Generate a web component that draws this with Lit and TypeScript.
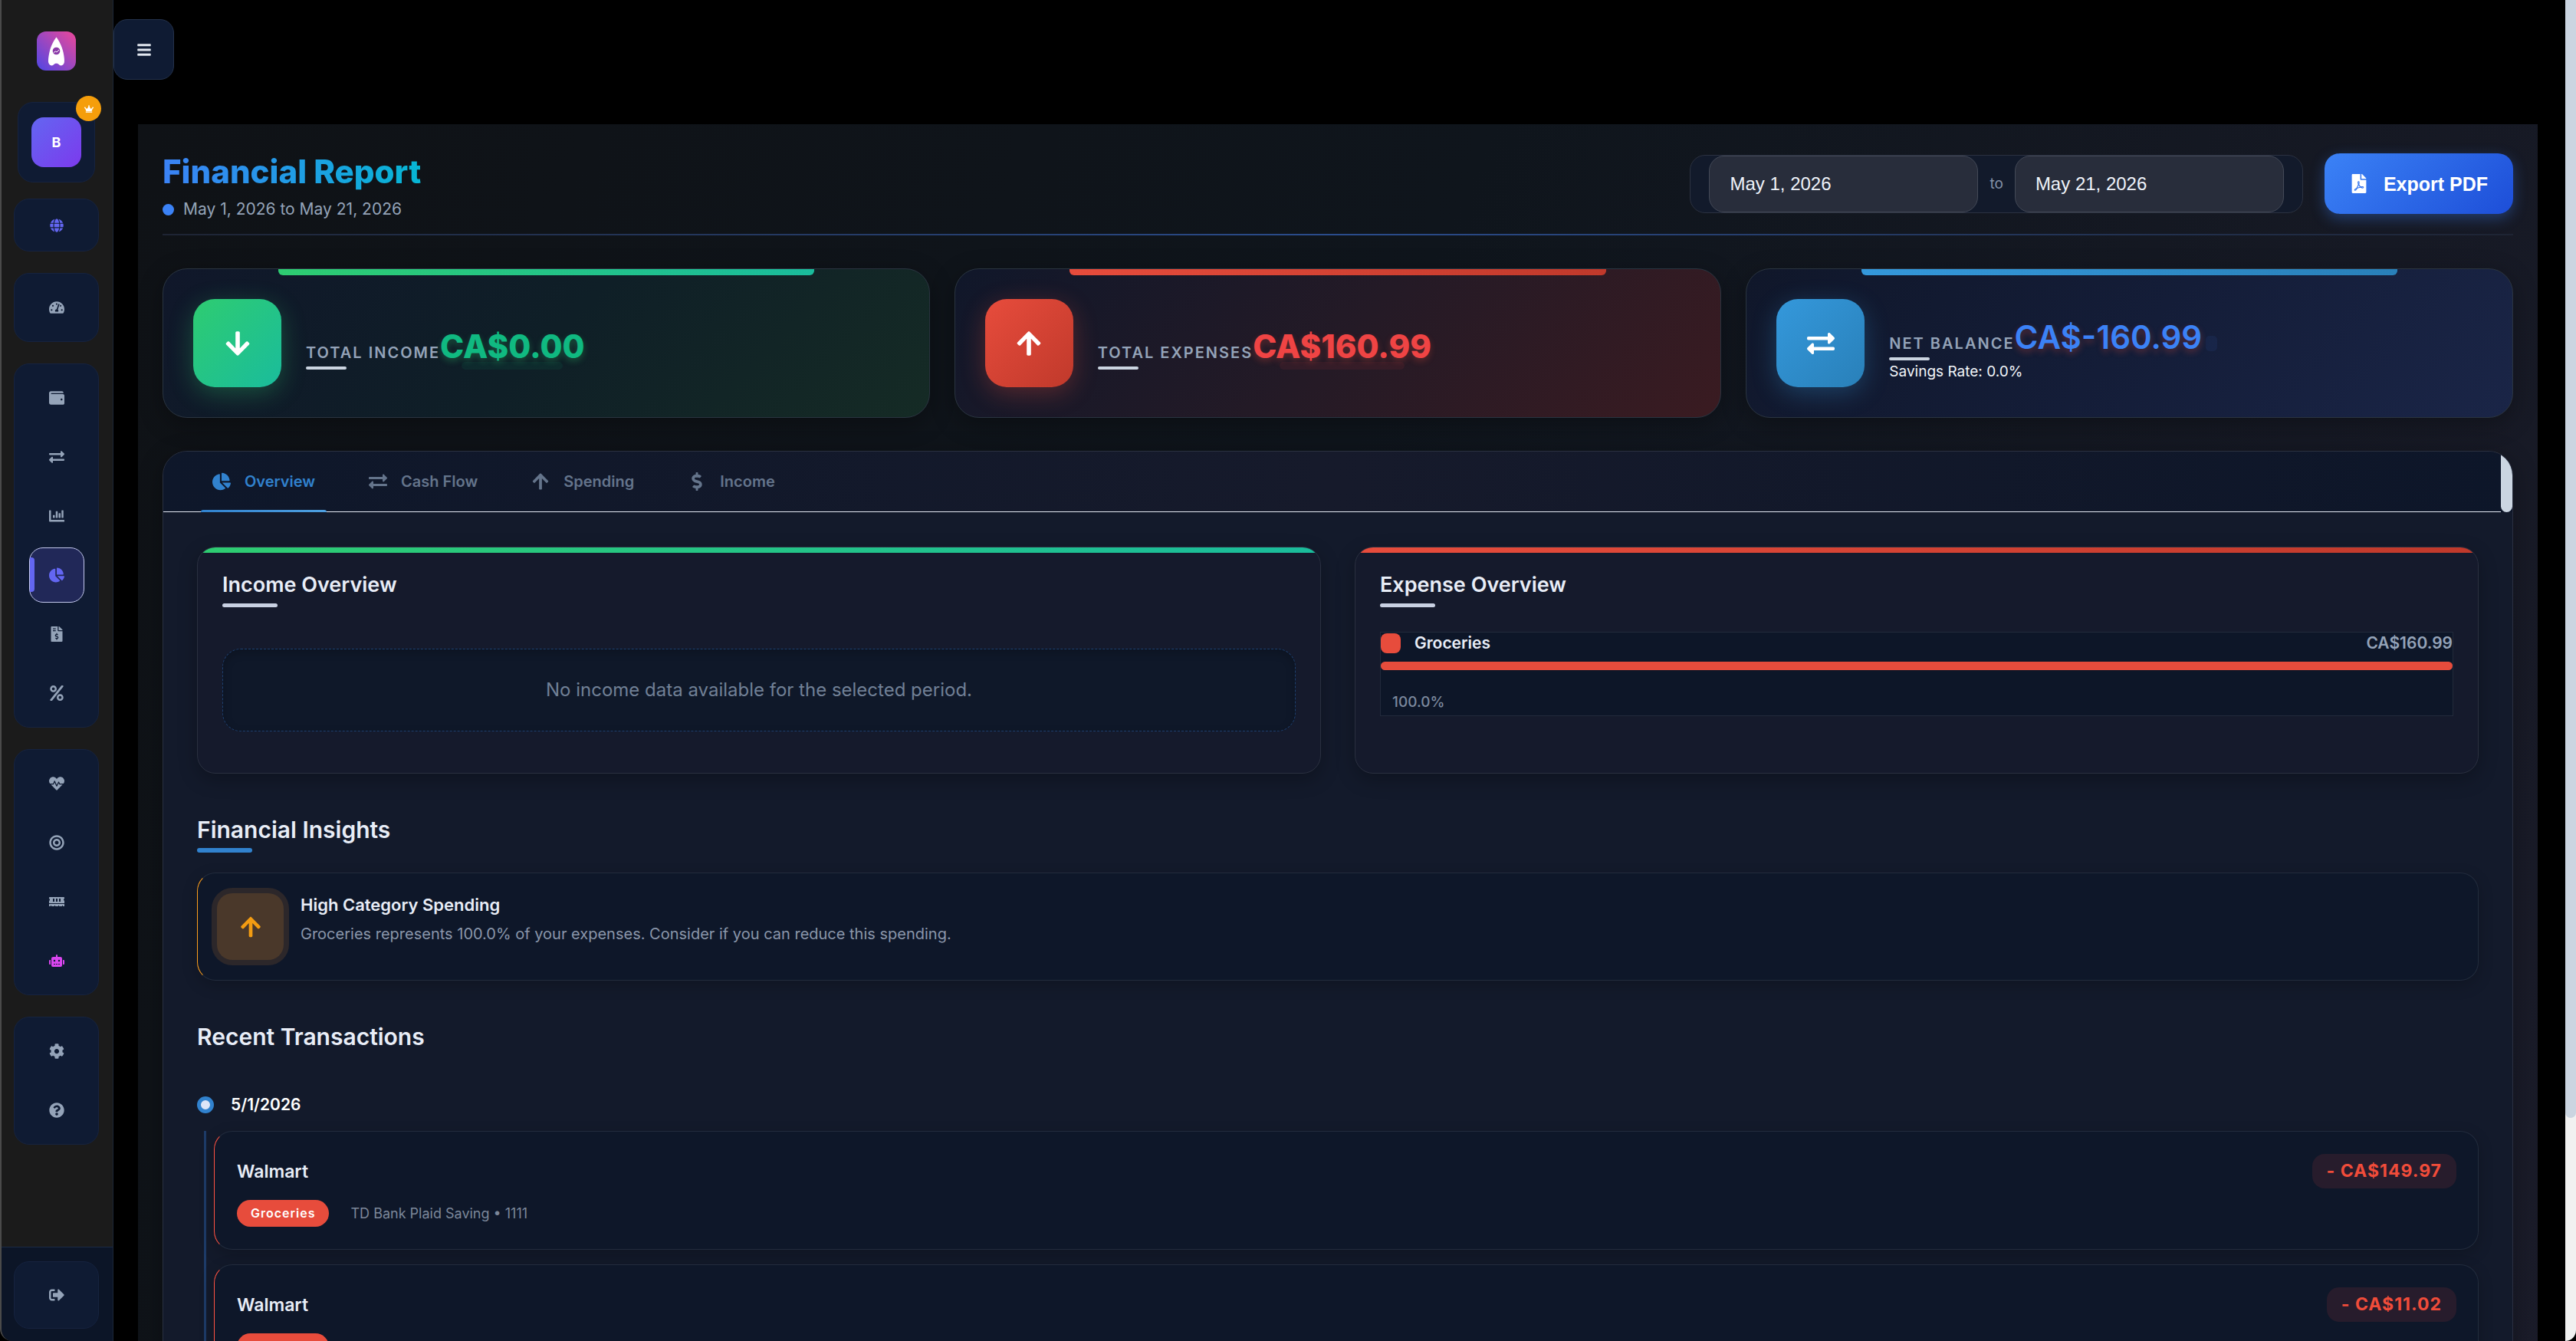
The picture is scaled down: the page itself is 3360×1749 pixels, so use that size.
import { LitElement, html, css, svg } from "lit";
import { customElement, property, state } from "lit/decorators.js";
import { classMap } from "lit/directives/class-map.js";
import { styleMap } from "lit/directives/style-map.js";

/* Icon outlines: [view box width, path]; every view box is 512 high. */
const ICONS: Record<string, [number, string]> = {
  bars: [448, "M16 132h416c8.837 0 16-7.163 16-16V76c0-8.837-7.163-16-16-16H16C7.163 60 0 67.163 0 76v40c0 8.837 7.163 16 16 16zm0 160h416c8.837 0 16-7.163 16-16v-40c0-8.837-7.163-16-16-16H16c-8.837 0-16 7.163-16 16v40c0 8.837 7.163 16 16 16zm0 160h416c8.837 0 16-7.163 16-16v-40c0-8.837-7.163-16-16-16H16c-8.837 0-16 7.163-16 16v40c0 8.837 7.163 16 16 16z"],
  arrowDown: [448, "M413.1 222.5l22.2 22.2c9.4 9.4 9.4 24.6 0 33.9L241 473c-9.4 9.4-24.6 9.4-33.9 0L12.7 278.6c-9.4-9.4-9.4-24.6 0-33.9l22.2-22.2c9.5-9.5 25-9.3 34.3.4L184 343.4V56c0-13.3 10.7-24 24-24h32c13.3 0 24 10.7 24 24v287.4l114.8-120.5c9.3-9.8 24.8-10 34.3-.4z"],
  arrowUp: [448, "M34.9 289.5l-22.2-22.2c-9.4-9.4-9.4-24.6 0-33.9L207 39c9.4-9.4 24.6-9.4 33.9 0l194.3 194.3c9.4 9.4 9.4 24.6 0 33.9L413 289.4c-9.5 9.5-25 9.3-34.3-.4L264 168.6V456c0 13.3-10.7 24-24 24h-32c-13.3 0-24-10.7-24-24V168.6L69.2 289.1c-9.3 9.8-24.8 10-34.3.4z"],
  exchange: [512, "M0 168v-16c0-13.255 10.745-24 24-24h360V80c0-21.367 25.899-32.042 40.971-16.971l80 80c9.372 9.373 9.372 24.569 0 33.941l-80 80C409.956 271.982 384 261.456 384 240v-48H24c-13.255 0-24-10.745-24-24zm488 152H128v-48c0-21.314-25.862-32.08-40.971-16.971l-80 80c-9.372 9.373-9.372 24.569 0 33.941l80 80C102.057 463.997 128 453.437 128 432v-48h360c13.255 0 24-10.745 24-24v-16c0-13.255-10.745-24-24-24z"],
  chartPie: [544, "M527.79 288H290.5l158.03 158.03c6.04 6.04 15.98 6.53 22.19.68 38.7-36.46 65.32-85.61 73.13-140.86 1.34-9.46-6.51-17.85-16.06-17.85zm-15.83-64.8C503.72 103.74 408.26 8.28 288.8.04 279.68-.59 272 7.1 272 16.24V240h223.77c9.14 0 16.82-7.68 16.19-16.8zM224 288V50.71c0-9.55-8.39-17.4-17.84-16.06C86.99 51.49-4.1 155.6.14 280.37 4.5 408.51 114.83 513.59 243.03 511.98c50.4-.63 96.97-16.87 135.26-44.03 7.9-5.6 8.42-17.23 1.57-24.08L224 288z"],
  wallet: [512, "M461.2 128H80c-8.84 0-16-7.16-16-16s7.16-16 16-16h384c8.84 0 16-7.16 16-16 0-26.51-21.49-48-48-48H64C28.65 32 0 60.65 0 96v320c0 35.35 28.65 64 64 64h397.2c28.02 0 50.8-21.53 50.8-48V176c0-26.47-22.78-48-50.8-48zM416 336c-17.67 0-32-14.33-32-32s14.33-32 32-32 32 14.33 32 32-14.33 32-32 32z"],
  chartBar: [512, "M332.8 320h38.4c6.4 0 12.8-6.4 12.8-12.8V172.8c0-6.4-6.4-12.8-12.8-12.8h-38.4c-6.4 0-12.8 6.4-12.8 12.8v134.4c0 6.4 6.4 12.8 12.8 12.8zm96 0h38.4c6.4 0 12.8-6.4 12.8-12.8V76.8c0-6.4-6.4-12.8-12.8-12.8h-38.4c-6.4 0-12.8 6.4-12.8 12.8v230.4c0 6.4 6.4 12.8 12.8 12.8zm-288 0h38.4c6.4 0 12.8-6.4 12.8-12.8v-70.4c0-6.4-6.4-12.8-12.8-12.8h-38.4c-6.4 0-12.8 6.4-12.8 12.8v70.4c0 6.4 6.4 12.8 12.8 12.8zm96 0h38.4c6.4 0 12.8-6.4 12.8-12.8V108.8c0-6.4-6.4-12.8-12.8-12.8h-38.4c-6.4 0-12.8 6.4-12.8 12.8v198.4c0 6.4 6.4 12.8 12.8 12.8zM496 384H64V80c0-8.84-7.16-16-16-16H16C7.16 64 0 71.16 0 80v336c0 17.67 14.33 32 32 32h464c8.84 0 16-7.16 16-16v-32c0-8.84-7.16-16-16-16z"],
  invoice: [384, "M377 105L279.1 7c-4.5-4.5-10.6-7-17-7H256v128h128v-6.1c0-6.3-2.5-12.4-7-16.9zm-153 31V0H24C10.7 0 0 10.7 0 24v464c0 13.3 10.7 24 24 24h336c13.3 0 24-10.7 24-24V160H248c-13.2 0-24-10.8-24-24zM64 72c0-4.42 3.58-8 8-8h80c4.42 0 8 3.58 8 8v16c0 4.42-3.58 8-8 8H72c-4.42 0-8-3.58-8-8V72zm0 80v-16c0-4.42 3.58-8 8-8h80c4.42 0 8 3.58 8 8v16c0 4.42-3.58 8-8 8H72c-4.42 0-8-3.58-8-8zm144 263.88V440c0 4.42-3.58 8-8 8h-16c-4.42 0-8-3.58-8-8v-24.29c-11.29-.58-22.27-4.52-31.37-11.35-3.9-2.93-4.1-8.77-.57-12.14l11.75-11.21c2.77-2.64 6.89-2.76 10.13-.73 3.87 2.42 8.26 3.72 12.82 3.72h28.11c6.5 0 11.8-5.92 11.8-13.19 0-5.95-3.61-11.19-8.77-12.73l-45-13.5c-18.59-5.58-31.58-23.42-31.58-43.39 0-24.52 19.05-44.44 42.67-45.07V232c0-4.42 3.58-8 8-8h16c4.42 0 8 3.58 8 8v24.29c11.29.58 22.27 4.51 31.37 11.35 3.9 2.93 4.1 8.77.57 12.14l-11.75 11.21c-2.77 2.64-6.89 2.76-10.13.73-3.87-2.43-8.26-3.72-12.82-3.72h-28.11c-6.5 0-11.8 5.92-11.8 13.19 0 5.95 3.61 11.19 8.77 12.73l45 13.5c18.59 5.58 31.58 23.42 31.58 43.39 0 24.53-19.05 44.44-42.67 45.07z"],
  percent: [448, "M112 224c61.9 0 112-50.1 112-112S173.9 0 112 0 0 50.1 0 112s50.1 112 112 112zm0-160c26.5 0 48 21.5 48 48s-21.5 48-48 48-48-21.5-48-48 21.5-48 48-48zm224 224c-61.9 0-112 50.1-112 112s50.1 112 112 112 112-50.1 112-112-50.1-112-112-112zm0 160c-26.5 0-48-21.5-48-48s21.5-48 48-48 48 21.5 48 48-21.5 48-48 48zM392.3.2l31.6-.1c19.4-.1 30.9 21.8 19.7 37.8L77.4 501.6a23.95 23.95 0 0 1-19.6 10.2l-33.4.1c-19.5 0-30.9-21.9-19.7-37.8l368-463.7C377.2 4 384.5.2 392.3.2z"],
  heartbeat: [512, "M320.2 243.8l-49.7 99.4c-6 12.1-23.4 11.7-28.9-.6l-56.9-126.3-30 71.7H60.6l182.5 186.5c7.1 7.3 18.6 7.3 25.7 0L451.4 288H342.3l-22.1-44.2zM473.7 73.9l-2.4-2.5c-51.5-52.6-135.8-52.6-187.4 0L256 100l-27.9-28.5c-51.5-52.7-135.9-52.7-187.4 0l-2.4 2.4C-10.4 123.7-12.5 203 31 256h102.4l35.9-86.2c5.4-12.9 23.6-13.1 29.4-.4l58.2 129.3 49-97.9c5.9-11.8 22.7-11.8 28.6 0l27.6 55.2H481c43.5-53 41.4-132.3-7.3-182.1z"],
  bullseye: [496, "M248 8C111.03 8 0 119.03 0 256s111.03 248 248 248 248-111.03 248-248S384.97 8 248 8zm0 432c-101.69 0-184-82.29-184-184 0-101.69 82.29-184 184-184 101.69 0 184 82.29 184 184 0 101.69-82.29 184-184 184zm0-312c-70.69 0-128 57.31-128 128s57.31 128 128 128 128-57.31 128-128-57.31-128-128-128zm0 192c-35.29 0-64-28.71-64-64s28.71-64 64-64 64 28.71 64 64-28.71 64-64 64z"],
  memory: [640, "M640 130.94V96c0-17.67-14.33-32-32-32H32c-17.67 0-32 14.33-32 32v34.94c18.6 6.61 32 24.19 32 45.06s-13.4 38.45-32 45.06V320h640v-98.94c-18.6-6.61-32-24.19-32-45.06s13.4-38.45 32-45.06zM224 256h-64V128h64v128zm128 0h-64V128h64v128zm128 0h-64V128h64v128zM0 448h64v-26.67c0-8.84 7.16-16 16-16s16 7.16 16 16V448h128v-26.67c0-8.84 7.16-16 16-16s16 7.16 16 16V448h128v-26.67c0-8.84 7.16-16 16-16s16 7.16 16 16V448h128v-26.67c0-8.84 7.16-16 16-16s16 7.16 16 16V448h64v-96H0v96z"],
  robot: [640, "M32 224h32v192H32a31.96 31.96 0 0 1-32-32V256a31.96 31.96 0 0 1 32-32zm512-48v272a64.06 64.06 0 0 1-64 64H160a64.06 64.06 0 0 1-64-64V176a79.97 79.97 0 0 1 80-80h112V32a32 32 0 0 1 64 0v64h112a79.97 79.97 0 0 1 80 80zm-280 80a40 40 0 1 0-40 40 40 40 0 0 0 40-40zm-8 128h-64v32h64zm96 0h-64v32h64zm104-128a40 40 0 1 0-40 40 40 40 0 0 0 40-40zm-8 128h-64v32h64zm192-128v128a31.96 31.96 0 0 1-32 32h-32V224h32a31.96 31.96 0 0 1 32 32z"],
  cog: [512, "M487.4 315.7l-42.6-24.6c4.3-23.2 4.3-47 0-70.2l42.6-24.6c4.9-2.8 7.1-8.6 5.5-14-11.1-35.6-30-67.8-54.7-94.6-3.8-4.1-10-5.1-14.8-2.3L380.8 110c-17.9-15.4-38.5-27.3-60.8-35.1V25.8c0-5.6-3.9-10.5-9.4-11.7-36.7-8.2-74.3-7.8-109.2 0-5.5 1.2-9.4 6.1-9.4 11.7V75c-22.2 7.9-42.8 19.8-60.8 35.1L88.7 85.5c-4.9-2.8-11-1.9-14.8 2.3-24.7 26.7-43.6 58.9-54.7 94.6-1.7 5.4.6 11.2 5.5 14L67.3 221c-4.3 23.2-4.3 47 0 70.2l-42.6 24.6c-4.9 2.8-7.1 8.6-5.5 14 11.1 35.6 30 67.8 54.7 94.6 3.8 4.1 10 5.1 14.8 2.3l42.6-24.6c17.9 15.4 38.5 27.3 60.8 35.1v49.2c0 5.6 3.9 10.5 9.4 11.7 36.7 8.2 74.3 7.8 109.2 0 5.5-1.2 9.4-6.1 9.4-11.7v-49.2c22.2-7.9 42.8-19.8 60.8-35.1l42.6 24.6c4.9 2.8 11 1.9 14.8-2.3 24.7-26.7 43.6-58.9 54.7-94.6 1.5-5.5-.7-11.3-5.6-14.1zM256 336c-44.1 0-80-35.9-80-80s35.9-80 80-80 80 35.9 80 80-35.9 80-80 80z"],
  question: [512, "M504 256c0 136.997-111.043 248-248 248S8 392.997 8 256C8 119.083 119.043 8 256 8s248 111.083 248 248zM262.655 90c-54.497 0-89.255 22.957-116.549 63.758-3.536 5.286-2.353 12.415 2.715 16.258l34.699 26.31c5.205 3.947 12.621 3.008 16.665-2.122 17.864-22.658 30.113-35.797 57.303-35.797 20.429 0 45.698 13.148 45.698 32.958 0 14.976-12.363 22.667-32.534 33.976C247.128 238.528 216 254.941 216 296v4c0 6.627 5.373 12 12 12h56c6.627 0 12-5.373 12-12v-1.333c0-28.462 83.186-29.647 83.186-106.667 0-58.002-60.165-102-116.531-102zM256 338c-25.365 0-46 20.635-46 46 0 25.364 20.635 46 46 46s46-20.636 46-46c0-25.365-20.635-46-46-46z"],
  signOut: [512, "M497 273L329 441c-15 15-41 4.5-41-17v-96H152c-13.3 0-24-10.7-24-24v-96c0-13.3 10.7-24 24-24h136V88c0-21.4 25.9-32 41-17l168 168c9.3 9.4 9.3 24.6 0 34zM192 436v-40c0-6.6-5.4-12-12-12H96c-17.7 0-32-14.3-32-32V160c0-17.7 14.3-32 32-32h84c6.6 0 12-5.4 12-12V76c0-6.6-5.4-12-12-12H96c-53 0-96 43-96 96v192c0 53 43 96 96 96h84c6.6 0 12-5.4 12-12z"],
  tachometer: [576, "M288 32C128.94 32 0 160.94 0 320c0 52.8 14.25 102.26 39.06 144.8 5.61 9.62 16.3 15.2 27.44 15.2h443c11.14 0 21.83-5.58 27.44-15.2C561.75 422.26 576 372.8 576 320c0-159.06-128.94-288-288-288zm0 64c14.71 0 26.58 10.13 30.32 23.65-1.11 2.26-2.64 4.23-3.45 6.67l-9.22 27.67c-5.13 3.49-10.97 6.01-17.64 6.01-17.67 0-32-14.33-32-32S270.33 96 288 96zM96 384c-17.67 0-32-14.33-32-32s14.33-32 32-32 32 14.33 32 32-14.33 32-32 32zm48-160c-17.67 0-32-14.33-32-32s14.33-32 32-32 32 14.33 32 32-14.33 32-32 32zm246.77-72.41l-61.33 184C343.13 347.33 352 364.54 352 384c0 11.72-3.38 22.55-8.88 32H232.88c-5.5-9.45-8.88-20.28-8.88-32 0-33.94 26.5-61.43 59.9-63.59l61.34-184.01c4.17-12.56 17.73-19.45 30.36-15.17 12.57 4.19 19.35 17.79 15.17 30.36zm14.66 57.2l15.52-46.55c3.47-1.29 7.13-2.23 11.05-2.23 17.67 0 32 14.33 32 32s-14.33 32-32 32c-11.38-.01-21.89-5.83-26.57-15.22zM480 384c-17.67 0-32-14.33-32-32s14.33-32 32-32 32 14.33 32 32-14.33 32-32 32z"],
  globe: [496, "M336.5 160C322 70.7 287.8 8 248 8s-74 62.7-88.5 152h177zM152 256c0 22.2 1.2 43.5 3.3 64h185.3c2.1-20.5 3.3-41.8 3.3-64s-1.2-43.5-3.3-64H155.3c-2.1 20.5-3.3 41.8-3.3 64zm324.7-96c-28.6-67.9-86.5-120.4-158-141.6 24.4 33.8 41.2 84.7 50 141.6h108zM177.2 18.4C105.8 39.6 47.8 92.1 19.3 160h108c8.7-56.9 25.5-107.8 49.9-141.6zM487.4 192H372.7c2.1 21 3.3 42.5 3.3 64s-1.2 43-3.3 64h114.6c5.5-20.5 8.6-41.8 8.6-64s-3.1-43.5-8.5-64zM120 256c0-21.5 1.2-43 3.3-64H8.6C3.2 212.5 0 233.8 0 256s3.2 43.5 8.6 64h114.6c-2-21-3.2-42.5-3.2-64zm39.5 96c14.5 89.3 48.7 152 88.5 152s74-62.7 88.5-152h-177zm159.3 141.6c71.4-21.2 129.4-73.7 158-141.6h-108c-8.8 56.9-25.6 107.8-50 141.6zM19.3 352c28.6 67.9 86.5 120.4 158 141.6-24.4-33.8-41.2-84.7-50-141.6h-108z"],
  crown: [640, "M528 448H112c-8.8 0-16 7.2-16 16v32c0 8.8 7.2 16 16 16h416c8.8 0 16-7.2 16-16v-32c0-8.8-7.2-16-16-16zm64-320c-26.5 0-48 21.5-48 48 0 7.1 1.6 13.7 4.4 19.8L476 239.2c-15.4 9.2-35.3 4-44.2-11.6L350.3 85C361 76.2 368 63 368 48c0-26.5-21.5-48-48-48s-48 21.5-48 48c0 15 7 28.2 17.7 37l-81.5 142.6c-8.9 15.6-28.9 20.8-44.2 11.6l-72.3-43.4c2.7-6 4.4-12.7 4.4-19.8 0-26.5-21.5-48-48-48S0 149.5 0 176s21.5 48 48 48c2.6 0 5.2-.4 7.7-.8L128 416h384l72.3-192.8c2.5.4 5.1.8 7.7.8 26.5 0 48-21.5 48-48s-21.5-48-48-48z"],
  dollar: [288, "M209.2 233.4l-108-31.6C88.7 198.2 80 186.5 80 173.5c0-16.3 13.2-29.5 29.5-29.5h66.3c12.2 0 24.2 3.7 34.2 10.5 6.1 4.1 14.3 3.1 19.5-2l34.8-34c7.1-6.9 6.1-18.4-1.8-24.5C238 74.8 207.4 64.1 176 64V16c0-8.8-7.2-16-16-16h-32c-8.8 0-16 7.2-16 16v48h-2.5C45.8 64-5.4 118.7.5 183.6c4.2 46.1 39.4 83.6 83.8 96.6l102.5 30c12.5 3.7 21.2 15.3 21.2 28.3 0 16.3-13.2 29.5-29.5 29.5h-66.3C100 368 88 364.3 78 357.5c-6.1-4.1-14.3-3.1-19.5 2l-34.8 34c-7.1 6.9-6.1 18.4 1.8 24.5 24.5 19.2 55.1 29.9 86.5 30v48c0 8.8 7.2 16 16 16h32c8.8 0 16-7.2 16-16v-48.2c46.6-.9 90.3-28.6 105.7-72.7 21.5-61.6-14.6-124.8-72.5-141.7z"],
  filePdf: [384, "M181.9 256.1c-5-16-4.9-46.9-2-46.9 8.4 0 7.6 36.9 2 46.9zm-1.7 47.2c-7.7 20.2-17.3 43.3-28.4 62.7 18.3-7 39-17.2 62.9-21.9-12.7-9.6-24.9-23.4-34.5-40.8zM86.1 428.1c0 .8 13.2-5.4 34.9-40.2-6.7 6.3-29.1 24.5-34.9 40.2zM248 160h136v328c0 13.3-10.7 24-24 24H24c-13.3 0-24-10.7-24-24V24C0 10.7 10.7 0 24 0h200v136c0 13.2 10.8 24 24 24zm-8 171.8c-20-12.2-33.3-29-42.7-53.8 4.5-18.5 11.6-46.6 6.2-64.2-4.7-29.4-42.4-26.5-47.8-6.8-5 18.3-.4 44.1 8.1 77-11.6 27.6-28.7 64.6-40.8 85.8-.1 0-.1.1-.2.1-27.1 13.9-73.6 44.5-54.5 68 5.6 6.9 16 10 21.5 10 17.9 0 35.7-18 61.1-61.8 25.8-8.5 54.1-19.1 79-23.2 21.7 11.8 47.1 19.5 64 19.5 29.2 0 31.2-32 19.7-43.4-13.9-13.6-54.3-9.7-73.6-7.2zM377 105L279 7c-4.5-4.5-10.6-7-17-7h-6v128h128v-6.1c0-6.3-2.5-12.4-7-16.9zm-74.1 255.3c4.1-2.7-2.5-11.9-42.8-9 37.1 15.8 42.8 9 42.8 9z"],
};

@customElement("fa-icon")
class FaIcon extends LitElement {
  @property() name = "bars";

  static styles = css`
    :host {
      display: inline-flex;
      width: 20px;
      height: 20px;
    }
    .glyph {
      display: block;
      width: 100%;
      height: 100%;
      fill: currentColor;
    }
  `;

  render() {
    const [width, path] = ICONS[this.name];
    return html`<svg class="glyph" viewBox="0 0 ${width} 512" aria-hidden="true">
      ${svg`<path d=${path}></path>`}
    </svg>`;
  }
}

interface NavItem {
  icon: string;
  label: string;
  accent?: boolean;
}

const NAV_GROUPS: NavItem[][] = [
  [{ icon: "tachometer", label: "Dashboard" }],
  [
    { icon: "wallet", label: "Accounts" },
    { icon: "exchange", label: "Transactions" },
    { icon: "chartBar", label: "Budgets" },
    { icon: "chartPie", label: "Reports" },
    { icon: "invoice", label: "Bills" },
    { icon: "percent", label: "Taxes" },
  ],
  [
    { icon: "heartbeat", label: "Financial health" },
    { icon: "bullseye", label: "Goals" },
    { icon: "memory", label: "Planning" },
    { icon: "robot", label: "Assistant", accent: true },
  ],
  [
    { icon: "cog", label: "Settings" },
    { icon: "question", label: "Help" },
  ],
];

@customElement("side-nav")
class SideNav extends LitElement {
  @state() private current = "Reports";

  static styles = css`
    :host {
      display: flex;
      flex-direction: column;
      box-sizing: border-box;
      width: 148px;
      height: 100%;
      background: #1b1b1b;
      border-left: 2px solid #4a4a4a;
      border-right: 1px solid #1c2638;
      border-bottom-left-radius: 16px;
      overflow: hidden;
    }
    a,
    button {
      color: inherit;
      text-decoration: none;
    }
    .top {
      flex: 1;
      display: flex;
      flex-direction: column;
      align-items: center;
      padding: 41px 2px 0 0;
      min-height: 0;
    }
    .logo {
      display: block;
      width: 51px;
      height: 51px;
      margin-bottom: 41px;
    }
    .user {
      position: relative;
      display: flex;
      align-items: center;
      justify-content: center;
      box-sizing: border-box;
      width: 101px;
      height: 105px;
      margin-bottom: 21px;
      padding: 0;
      font: inherit;
      background: #0f1b33;
      border: 1px solid #16233f;
      border-radius: 20px;
    }
    .avatar {
      display: flex;
      align-items: center;
      justify-content: center;
      width: 65px;
      height: 65px;
      border-radius: 16px;
      background: linear-gradient(135deg, #6366f1, #7c3aed);
      color: #fff;
      font-size: 18px;
      font-weight: 700;
    }
    .crown {
      position: absolute;
      top: -9px;
      right: -9px;
      display: flex;
      align-items: center;
      justify-content: center;
      width: 33px;
      height: 33px;
      border-radius: 50%;
      background: #f59e0b;
      color: #fff;
    }
    .crown fa-icon {
      width: 12px;
      height: 12px;
    }
    .group,
    .language,
    .logout {
      box-sizing: border-box;
      width: 111px;
      background: #0f1b33;
      border: 1px solid #16233f;
      border-radius: 20px;
    }
    .language {
      display: flex;
      align-items: center;
      justify-content: center;
      height: 69px;
      margin-bottom: 28px;
      padding: 0;
      color: #6366f1;
    }
    .language fa-icon {
      width: 18px;
      height: 18px;
    }
    .group {
      display: flex;
      flex-direction: column;
      align-items: center;
      gap: 5px;
      margin-bottom: 28px;
      padding: 8px 0;
    }
    .item {
      display: flex;
      align-items: center;
      justify-content: center;
      box-sizing: border-box;
      width: 72px;
      height: 72px;
      border: 1px solid transparent;
      border-radius: 18px;
      color: #94a3b8;
    }
    .item.accent {
      color: #d946ef;
    }
    .item.active {
      position: relative;
      color: #6366f1;
      background: #212858;
      border-color: #c3c8ee;
    }
    .item.active::before {
      content: "";
      position: absolute;
      left: 0;
      top: 12px;
      bottom: 13px;
      width: 6px;
      border-radius: 0 4px 4px 0;
      background: #6366f1;
    }
    .foot {
      display: flex;
      justify-content: center;
      padding: 18px 2px 16px 0;
      background: #0c1527;
      border-top: 1px solid #1b2a45;
    }
    .logout {
      display: flex;
      align-items: center;
      justify-content: center;
      height: 88px;
      padding: 0;
      color: #94a3b8;
    }
  `;

  render() {
    return html`
      <div class="top">
        <svg class="logo" viewBox="0 0 51 51" aria-hidden="true">
          <defs>
            <linearGradient id="logo-fill" x1="0" y1="1" x2="1" y2="0">
              <stop offset="0" stop-color="#4f46e5"></stop>
              <stop offset="1" stop-color="#ec4899"></stop>
            </linearGradient>
          </defs>
          <rect width="51" height="51" rx="12" fill="url(#logo-fill)"></rect>
          <path
            fill="#fff"
            d="M25.5 7.5C28.5 11.5 32.5 18 34.5 27C35.8 33 36.3 38 35.8 40.5C35 44 31.5 45.5 29.5 43.8C28 42.2 27 41.8 25.5 41.8C24 41.8 23 42.2 21.5 43.8C19.5 45.5 16 44 15.2 40.5C14.7 38 15.2 33 16.5 27C18.5 18 22.5 11.5 25.5 7.5Z"
          ></path>
          <circle cx="25.5" cy="25.5" r="4.8" fill="#8b3aa8"></circle>
          <path
            d="M22 27.5l2.5-1.5 1.5 1 3-3"
            fill="none"
            stroke="#fff"
            stroke-width="1"
          ></path>
        </svg>
        <button class="user" aria-label="Account">
          <span class="avatar">B</span>
          <span class="crown"><fa-icon name="crown"></fa-icon></span>
        </button>
        <button class="language" aria-label="Language">
          <fa-icon name="globe"></fa-icon>
        </button>
        ${NAV_GROUPS.map(
          (group) => html`<nav class="group">
            ${group.map(
              (item) => html`<a
                class=${classMap({
                  item: true,
                  accent: !!item.accent,
                  active: item.label === this.current,
                })}
                href="#${item.icon}"
                aria-label=${item.label}
                @click=${() => (this.current = item.label)}
                ><fa-icon name=${item.icon}></fa-icon
              ></a>`
            )}
          </nav>`
        )}
      </div>
      <div class="foot">
        <button class="logout" aria-label="Log out">
          <fa-icon name="signOut"></fa-icon>
        </button>
      </div>
    `;
  }
}

@customElement("stat-card")
class StatCard extends LitElement {
  @property({ reflect: true }) tone = "income";
  @property() icon = "arrowDown";
  @property() label = "";
  @property() value = "";
  @property() note = "";

  static styles = css`
    :host {
      --from: #2ecc71;
      --to: #1abc9c;
      --text: #10b981;
      --glow: rgba(46, 204, 113, 0.3);
      --tint: #152b25;
      position: relative;
      display: flex;
      align-items: center;
      gap: 32px;
      box-sizing: border-box;
      padding: 39px;
      border: 1px solid #2a3440;
      border-radius: 32px;
      background: linear-gradient(135deg, #10172a, #0f1f27 50%, var(--tint));
      box-shadow: 0 8px 32px rgba(0, 0, 0, 0.3);
      overflow: hidden;
    }
    :host([tone="expense"]) {
      --from: #e74c3c;
      --to: #c0392b;
      --text: #ef4444;
      --glow: rgba(231, 76, 60, 0.3);
      --tint: #3a1b21;
      background: linear-gradient(135deg, #10172a, #241a26 50%, var(--tint));
    }
    :host([tone="balance"]) {
      --from: #3498db;
      --to: #2980b9;
      --text: #3b82f6;
      --glow: rgba(52, 152, 219, 0.3);
      --tint: #1a2547;
      background: linear-gradient(135deg, #10172a, #141d38 50%, var(--tint));
    }
    .stripe {
      position: absolute;
      top: 0;
      left: 15%;
      right: 15%;
      height: 8px;
      border-radius: 0 0 6px 6px;
      background: linear-gradient(90deg, var(--from), var(--to));
    }
    .tile {
      flex: none;
      display: flex;
      align-items: center;
      justify-content: center;
      width: 115px;
      height: 115px;
      border-radius: 28px;
      background: linear-gradient(135deg, var(--from), var(--to));
      box-shadow: 0 8px 32px var(--glow);
      color: #fff;
    }
    .tile fa-icon {
      width: 36px;
      height: 36px;
    }
    .body {
      padding-top: 9px;
    }
    .line {
      display: flex;
      align-items: baseline;
    }
    .label {
      position: relative;
      color: #94a3b8;
      font-size: 20px;
      line-height: 24px;
      font-weight: 600;
      letter-spacing: 2px;
    }
    .label::after {
      content: "";
      position: absolute;
      left: 0;
      top: 30px;
      width: 53px;
      height: 4px;
      border-radius: 2px;
      background: #cbd5e1;
    }
    .value {
      position: relative;
      color: var(--text);
      font-size: 42px;
      line-height: 66px;
      font-weight: 800;
      text-shadow: 0 4px 8px var(--glow);
    }
    .value::after {
      content: "";
      position: absolute;
      left: 15%;
      right: 15%;
      bottom: 3px;
      height: 10px;
      border-radius: 5px;
      background: var(--text);
      opacity: 0.08;
    }
    :host([tone="balance"]) .value {
      font-weight: 600;
      text-shadow: 0 4px 8px rgba(231, 76, 60, 0.35);
    }
    :host([tone="balance"]) .value::after {
      left: 102%;
      right: -20px;
      bottom: 15px;
      height: 20px;
    }
    .note {
      color: #f1f5f9;
      font-size: 19px;
      line-height: 24px;
    }
  `;

  render() {
    return html`
      <span class="stripe"></span>
      <span class="tile"><fa-icon name=${this.icon}></fa-icon></span>
      <div class="body">
        <div class="line">
          <span class="label">${this.label}</span><span class="value">${this.value}</span>
        </div>
        ${this.note ? html`<div class="note">${this.note}</div>` : null}
      </div>
    `;
  }
}

const TABS = [
  { id: "overview", icon: "chartPie", label: "Overview" },
  { id: "cash-flow", icon: "exchange", label: "Cash Flow" },
  { id: "spending", icon: "arrowUp", label: "Spending" },
  { id: "income", icon: "dollar", label: "Income" },
];

const EXPENSES = [{ name: "Groceries", amount: "CA$160.99", percent: 100 }];

const TRANSACTIONS = [
  {
    name: "Walmart",
    category: "Groceries",
    account: "TD Bank Plaid Saving • 1111",
    amount: "- CA$149.97",
  },
  {
    name: "Walmart",
    category: "Groceries",
    account: "TD Bank Plaid Saving • 1111",
    amount: "- CA$11.02",
  },
];

@customElement("app-root")
class AppRoot extends LitElement {
  @state() private tab = "overview";

  static styles = css`
    :host {
      display: flex;
      height: 100vh;
      overflow: hidden;
      background: #000;
      color: #e8edf7;
      font-family: Inter, "Liberation Sans", sans-serif;
      font-size: 20px;
      line-height: 24px;
    }
    h1,
    h2,
    h3,
    p,
    ul {
      margin: 0;
      padding: 0;
      font-size: inherit;
      font-weight: inherit;
    }
    side-nav {
      flex: none;
    }
    button,
    input {
      font: inherit;
    }
    .main {
      flex: 1;
      min-width: 0;
      display: flex;
      flex-direction: column;
      align-items: stretch;
      gap: 58px;
      padding-top: 25px;
      overflow: hidden;
    }
    .toggle {
      flex: none;
      display: flex;
      align-items: center;
      justify-content: center;
      width: 79px;
      height: 79px;
      padding: 0;
      border: 1px solid #24324b;
      border-radius: 18px;
      background: #0f1b33;
      color: #e2e8f0;
    }
    .page {
      flex: none;
      margin: 0 36px 0 32px;
      padding: 38px 32px;
      background: linear-gradient(115deg, #0f1216, #0f151c 45%, #1b1c2a);
    }
    .scroll {
      flex: none;
      display: flex;
      flex-direction: column;
      width: 14px;
      background: #f1f1f1;
      border-bottom-right-radius: 16px;
    }
    .thumb {
      flex: 5;
      border-radius: 0 0 8px 8px;
      background: #cbd5e1;
    }
    .rest {
      flex: 1;
    }

    /* Page header */
    .head {
      display: flex;
      align-items: flex-start;
      justify-content: space-between;
      gap: 32px;
    }
    .title {
      width: max-content;
      font-size: 42px;
      line-height: 48px;
      font-weight: 800;
      background: linear-gradient(90deg, #3b82f6, #06b6d4);
      -webkit-background-clip: text;
      background-clip: text;
      color: transparent;
    }
    .period {
      display: flex;
      align-items: center;
      gap: 12px;
      margin-top: 13px;
      color: #94a3b8;
      font-size: 21px;
    }
    .period-dot {
      width: 15px;
      height: 15px;
      border-radius: 50%;
      background: #3b82f6;
    }
    .actions {
      display: flex;
      align-items: center;
      gap: 28px;
    }
    .range {
      display: flex;
      align-items: center;
      gap: 15px;
      padding: 0 24px;
      border: 1px solid #2b3140;
      border-radius: 20px;
      background: #121a2b;
      color: #8491a7;
      font-size: 19px;
    }
    .date {
      box-sizing: border-box;
      width: 351px;
      height: 74px;
      padding: 0 26px;
      border: 1px solid #434957;
      border-radius: 20px;
      background: #282d3b;
      color: #eef2f9;
      font-family: "Liberation Sans", Arial, sans-serif;
      font-size: 24px;
    }
    .export {
      display: flex;
      align-items: center;
      gap: 20px;
      height: 79px;
      padding: 0 33px;
      border: 0;
      border-radius: 20px;
      background: linear-gradient(135deg, #3b82f6, #1d4ed8);
      box-shadow: 0 6px 18px rgba(59, 130, 246, 0.35);
      color: #fff;
      font-family: "Liberation Sans", Arial, sans-serif;
      font-size: 25px;
      font-weight: 700;
    }
    .export fa-icon {
      width: 24px;
      height: 25px;
    }
    .rule {
      height: 2px;
      margin: 20px 0 43px;
      background: linear-gradient(90deg, #1e2433, #2a4c8c 50%, #1e2433);
    }

    .stats {
      display: grid;
      grid-template-columns: repeat(3, 1fr);
      gap: 32px;
      margin-bottom: 43px;
    }

    /* Report card */
    .report {
      border: 1px solid #2a3040;
      border-radius: 32px;
      background: #131a2b;
      box-shadow: 0 8px 32px rgba(0, 0, 0, 0.3);
      overflow: hidden;
    }
    .tabs {
      display: flex;
      height: 79px;
      background: linear-gradient(90deg, #0e172a, #161a2b 50%, #0d1629);
    }
    .tablist {
      flex: 1;
      display: flex;
      padding-left: 29px;
      border-bottom: 1px solid #e6ebf5;
    }
    .tab {
      position: relative;
      display: flex;
      align-items: center;
      gap: 18px;
      padding: 0 35px;
      border: 0;
      background: none;
      color: #64748b;
      font-weight: 600;
    }
    .tab fa-icon {
      width: 24px;
      height: 24px;
    }
    .tab.active {
      color: #3182ce;
    }
    .tab.active::after {
      content: "";
      position: absolute;
      left: 10%;
      right: 10%;
      bottom: -1px;
      height: 3px;
      border-radius: 3px 3px 0 0;
      background: linear-gradient(90deg, #3182ce, #4ea0e0);
    }
    .tabs-thumb {
      width: 15px;
      border-radius: 0 0 8px 8px;
      background: #cbd5e1;
    }
    .pane {
      padding: 45px 44px;
    }

    .overviews {
      display: grid;
      grid-template-columns: 1fr 1fr;
      gap: 44px;
    }
    .overview {
      border: 1px solid #2a3040;
      border-radius: 24px;
      background: #151a2c;
      box-shadow: 0 8px 24px rgba(0, 0, 0, 0.25);
      overflow: hidden;
    }
    .overview::before {
      content: "";
      display: block;
      height: 7px;
      background: linear-gradient(90deg, #2ecc71, #1abc9c);
    }
    .overview.expense::before {
      background: linear-gradient(90deg, #e74c3c, #c0392b);
    }
    .overview-body {
      display: flex;
      flex-direction: column;
      padding: 26px 32px 32px;
    }
    .overview-title {
      font-size: 27px;
      line-height: 32px;
      font-weight: 600;
    }
    .overview-title::after {
      content: "";
      display: block;
      width: 72px;
      height: 5px;
      margin: 8px 0 32px;
      border-radius: 3px;
      background: #c8d0e2;
    }
    .empty {
      margin: 22px 0;
      padding: 37px;
      border: 1px dashed #1d3f6e;
      border-radius: 24px;
      background: #0f1829;
      box-shadow: inset 0 4px 12px rgba(0, 0, 0, 0.2);
      color: #718096;
      font-size: 24px;
      line-height: 32px;
      text-align: center;
    }
    .category {
      list-style: none;
      border: 1px solid #222a3b;
      background: #0d1628;
    }
    .category-head {
      display: flex;
      align-items: center;
      gap: 18px;
      padding-top: 1px;
      font-size: 21px;
      font-weight: 600;
    }
    .swatch {
      width: 26px;
      height: 26px;
      border-radius: 8px;
      background: #e74c3c;
    }
    .category-amount {
      margin-left: auto;
      color: #94a3b8;
    }
    .bar {
      height: 11px;
      margin-top: 11px;
      border-radius: 6px;
      background: #1b2334;
    }
    .bar-fill {
      height: 100%;
      border-radius: 6px;
      background: #e74c3c;
    }
    .share {
      padding: 30px 15px 5px;
      color: #7c899e;
      font-size: 19px;
      font-weight: 500;
    }

    .section-title {
      margin-top: 55px;
      font-size: 30px;
      line-height: 36px;
      font-weight: 600;
    }
    .section-title.marked::after {
      content: "";
      display: block;
      width: 72px;
      height: 6px;
      margin: 6px 0 26px;
      border-radius: 3px;
      background: #3182ce;
    }
    .insight {
      display: flex;
      gap: 22px;
      padding: 26px 25px;
      border: 1px solid #222c3d;
      border-left-color: #ff9f1c;
      border-radius: 24px;
      background: #0e1729;
      box-shadow: 0 6px 20px rgba(0, 0, 0, 0.2);
    }
    .insight-icon {
      display: flex;
      align-items: center;
      justify-content: center;
      width: 87px;
      height: 87px;
      border-radius: 20px;
      background: #4a382a;
      box-shadow: 0 0 0 7px #2c272a;
      color: #f39c12;
    }
    .insight-icon fa-icon {
      width: 30px;
      height: 30px;
    }
    .insight-title {
      margin-top: 3px;
      font-size: 22px;
      font-weight: 600;
    }
    .insight-text {
      margin-top: 14px;
      color: #8a96aa;
    }

    .day {
      display: flex;
      align-items: center;
      gap: 22px;
      margin: 59px 0 22px;
      color: #fff;
      font-size: 21px;
      font-weight: 600;
    }
    .day-dot {
      box-sizing: border-box;
      width: 22px;
      height: 22px;
      border: 5px solid #3182ce;
      border-radius: 50%;
      background: #dde6f8;
    }
    .timeline {
      display: grid;
      grid-template-columns: 3px 1fr;
      gap: 10px;
      padding-left: 9px;
    }
    .track {
      background: #1d3b68;
    }
    .entries {
      display: flex;
      flex-direction: column;
      gap: 19px;
      list-style: none;
    }
    .entry {
      padding: 29px 28px 29px 29px;
      border: 1px solid #222c3d;
      border-left-color: #ff5242;
      border-radius: 24px;
      background: #0e1729;
      box-shadow: 0 6px 20px rgba(0, 0, 0, 0.2);
    }
    .entry-top,
    .entry-meta {
      display: flex;
      align-items: center;
      justify-content: space-between;
    }
    .entry-name {
      font-size: 23px;
      line-height: 28px;
      font-weight: 600;
    }
    .entry-amount {
      padding: 0 19px;
      border-radius: 16px;
      background: #271c2c;
      color: #f04c3a;
      font-size: 23px;
      line-height: 45px;
      font-weight: 700;
      letter-spacing: 1px;
    }
    .entry-meta {
      justify-content: flex-start;
      gap: 28px;
      margin-top: 15px;
      color: #7c879a;
      font-size: 18px;
    }
    .badge {
      padding: 0 18px;
      border-radius: 18px;
      background: #e74c3c;
      color: #fff;
      font-size: 16px;
      line-height: 35px;
      font-weight: 600;
      letter-spacing: 1px;
    }
  `;

  render() {
    return html`
      <side-nav></side-nav>
      <div class="main">
        <button class="toggle" aria-label="Toggle menu"><fa-icon name="bars"></fa-icon></button>
        <main class="page">
          <header class="head">
            <div>
              <h1 class="title">Financial Report</h1>
              <p class="period"><span class="period-dot"></span>May 1, 2026 to May 21, 2026</p>
            </div>
            <div class="actions">
              <div class="range">
                <input class="date" type="text" aria-label="Start date" value="May 1, 2026" />
                <span>to</span>
                <input class="date" type="text" aria-label="End date" value="May 21, 2026" />
              </div>
              <button class="export"><fa-icon name="filePdf"></fa-icon>Export PDF</button>
            </div>
          </header>
          <div class="rule"></div>
          <section class="stats">
            <stat-card tone="income" icon="arrowDown" label="TOTAL INCOME" value="CA$0.00"></stat-card>
            <stat-card tone="expense" icon="arrowUp" label="TOTAL EXPENSES" value="CA$160.99"></stat-card>
            <stat-card
              tone="balance"
              icon="exchange"
              label="NET BALANCE"
              value="CA$-160.99"
              note="Savings Rate: 0.0%"
            ></stat-card>
          </section>
          <section class="report">
            <div class="tabs">
              <div class="tablist" role="tablist">
                ${TABS.map(
                  (t) => html`<button
                    class=${classMap({ tab: true, active: t.id === this.tab })}
                    role="tab"
                    aria-selected=${t.id === this.tab}
                    @click=${() => (this.tab = t.id)}
                  >
                    <fa-icon name=${t.icon}></fa-icon>${t.label}
                  </button>`
                )}
              </div>
              <span class="tabs-thumb"></span>
            </div>
            <div class="pane">
              <div class="overviews">
                <section class="overview">
                  <div class="overview-body">
                    <h2 class="overview-title">Income Overview</h2>
                    <p class="empty">No income data available for the selected period.</p>
                  </div>
                </section>
                <section class="overview expense">
                  <div class="overview-body">
                    <h2 class="overview-title">Expense Overview</h2>
                    <ul>
                      ${EXPENSES.map(
                        (e) => html`<li class="category">
                          <div class="category-head">
                            <span class="swatch"></span>
                            <span>${e.name}</span>
                            <span class="category-amount">${e.amount}</span>
                          </div>
                          <div class="bar">
                            <div class="bar-fill" style=${styleMap({ width: `${e.percent}%` })}></div>
                          </div>
                          <div class="share">${e.percent.toFixed(1)}%</div>
                        </li>`
                      )}
                    </ul>
                  </div>
                </section>
              </div>

              <h2 class="section-title marked">Financial Insights</h2>
              <article class="insight">
                <span class="insight-icon"><fa-icon name="arrowUp"></fa-icon></span>
                <div>
                  <h3 class="insight-title">High Category Spending</h3>
                  <p class="insight-text">
                    Groceries represents 100.0% of your expenses. Consider if you can reduce this
                    spending.
                  </p>
                </div>
              </article>

              <h2 class="section-title">Recent Transactions</h2>
              <h3 class="day"><span class="day-dot"></span>5/1/2026</h3>
              <div class="timeline">
                <span class="track"></span>
                <ul class="entries">
                  ${TRANSACTIONS.map(
                    (t) => html`<li class="entry">
                      <div class="entry-top">
                        <span class="entry-name">${t.name}</span>
                        <span class="entry-amount">${t.amount}</span>
                      </div>
                      <div class="entry-meta">
                        <span class="badge">${t.category}</span>
                        <span>${t.account}</span>
                      </div>
                    </li>`
                  )}
                </ul>
              </div>
            </div>
          </section>
        </main>
      </div>
      <div class="scroll"><div class="thumb"></div><div class="rest"></div></div>
    `;
  }
}
